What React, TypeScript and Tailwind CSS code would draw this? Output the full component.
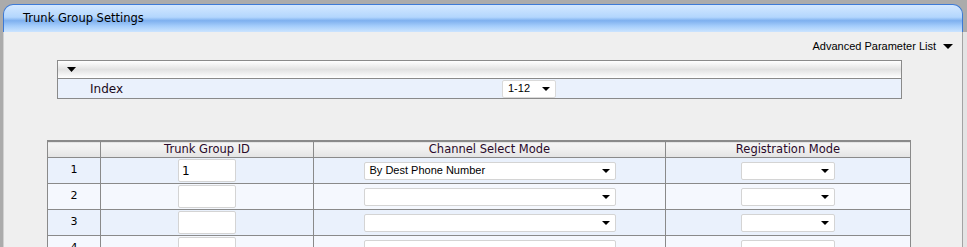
import React from 'react';

const verdana = { fontFamily: '"DejaVu Sans", Verdana, sans-serif' };
const arial = { fontFamily: '"Liberation Sans", Arial, sans-serif' };

function Arrow({ w = 9, h = 5 }: { w?: number; h?: number }) {
  return (
    <svg width={w} height={h} viewBox={`0 0 ${w} ${h}`} className="shrink-0">
      <path d={`M0 0H${w}L${w / 2} ${h}Z`} fill="#000" />
    </svg>
  );
}

function FakeSelect({ width, value }: { width: string; value?: string }) {
  return (
    <div
      className={`${width} h-[18px] bg-white border border-[#d4d4d4] rounded-[2px] flex items-center justify-between pl-[5px] pr-[5px] text-[11px] text-black`}
      style={arial}
    >
      <span>{value ?? ''}</span>
      <Arrow w={8} h={4} />
    </div>
  );
}

const rows = [
  { n: 1, id: '1', mode: 'By Dest Phone Number' },
  { n: 2, id: '', mode: '' },
  { n: 3, id: '', mode: '' },
  { n: 4, id: '', mode: '' },
];

export default function App() {
  return (
    <div className="w-[967px] h-[247px] overflow-hidden bg-[#ababab] pt-[4px]">
      {/* Title bar */}
      <div className="ml-[3px] mr-[4px] h-[28px] rounded-t-[10px] border border-b-0 border-[#3d7ad6] bg-[linear-gradient(to_bottom,#d3e8ff_0%,#b3d6fd_45%,#7eb0ef_58%,#a5cdfb_78%,#cbe4ff_100%)] flex items-center pl-[19px] border-b border-b-[#8e9aa8]">
        <span className="text-[11.5px] text-[#000] leading-none mt-[1px]" style={verdana}>
          Trunk Group Settings
        </span>
      </div>

      {/* Body */}
      <div className="ml-[3px] flex h-[215px]">
        <div className="flex-1 bg-[#efefef] border-l border-[#d0d0d0]">
          <div className="flex justify-end items-center pr-[9px] pt-[6px] h-[22px] gap-[7px]">
            <span className="text-[11px] text-black" style={arial}>Advanced Parameter List</span>
            <Arrow w={10} h={5} />
          </div>

          {/* Index filter */}
          <div className="ml-[53px] w-[845px] mt-[6px] border border-[#8a8a8a]">
            <div className="h-[18px] border-b border-[#8a8a8a] bg-[linear-gradient(to_bottom,#ffffff_0%,#e2e2e2_50%,#ffffff_100%)] flex items-center pl-[9px]">
              <Arrow />
            </div>
            <div className="h-[19px] bg-[#eaf1fc] flex items-center">
              <span className="pl-[32px] w-[444px] text-[12px] text-[#1a0a1a]" style={verdana}>Index</span>
              <div
                className="w-[54px] h-[18px] bg-white border border-[#dadada] rounded-[2px] flex items-center justify-between pl-[5px] pr-[5px] text-[11px]"
                style={arial}
              >
                <span>1-12</span>
                <Arrow w={8} h={4} />
              </div>
            </div>
          </div>

          {/* Main table */}
          <table className="ml-[43px] mt-[41px] w-[864px] border-collapse border-x border-[#8a8a8a]" style={verdana}>
            <thead>
              <tr className="h-[16px] border-t-2 border-[#8a8a8a] bg-[linear-gradient(to_bottom,#f4f4f4_0%,#f0f0f0_40%,#e3e3e3_100%)] text-[11.5px] text-[#2a0a2a]">
                <th className="w-[53px] border-r border-b border-[#8a8a8a] font-normal p-0"></th>
                <th className="w-[213px] border-r border-b border-[#8a8a8a] font-normal p-0 leading-[15px]">Trunk Group ID</th>
                <th className="w-[352px] border-r border-b border-[#8a8a8a] font-normal p-0 leading-[15px]">Channel Select Mode</th>
                <th className="border-b border-[#8a8a8a] font-normal p-0 leading-[15px]">Registration Mode</th>
              </tr>
            </thead>
            <tbody>
              {rows.map((r) => (
                <tr key={r.n} className={`h-[26px] border-b border-[#8a8a8a] ${r.n % 2 === 1 ? 'bg-[#eaf1fc]' : 'bg-[#f5f8fe]'}`}>
                  <td className="border-r border-[#8a8a8a] text-center text-[11px] text-black p-0">{r.n}</td>
                  <td className="border-r border-[#8a8a8a] p-0">
                    <div className="flex justify-center">
                      <div className="w-[58px] h-[23px] bg-white border border-[#d4d4d4] rounded-[2px] flex items-center pl-[3px] text-[12px] text-black">
                        {r.id}
                      </div>
                    </div>
                  </td>
                  <td className="border-r border-[#8a8a8a] p-0">
                    <div className="flex justify-center">
                      <FakeSelect width="w-[252px]" value={r.mode} />
                    </div>
                  </td>
                  <td className="p-0">
                    <div className="flex justify-center">
                      <FakeSelect width="w-[94px]" />
                    </div>
                  </td>
                </tr>
              ))}
            </tbody>
          </table>
        </div>
        <div className="w-[1px] bg-[#a3a3a3]" />
        <div className="w-[4px] bg-[#e4e4e4]" />
      </div>
    </div>
  );
}
